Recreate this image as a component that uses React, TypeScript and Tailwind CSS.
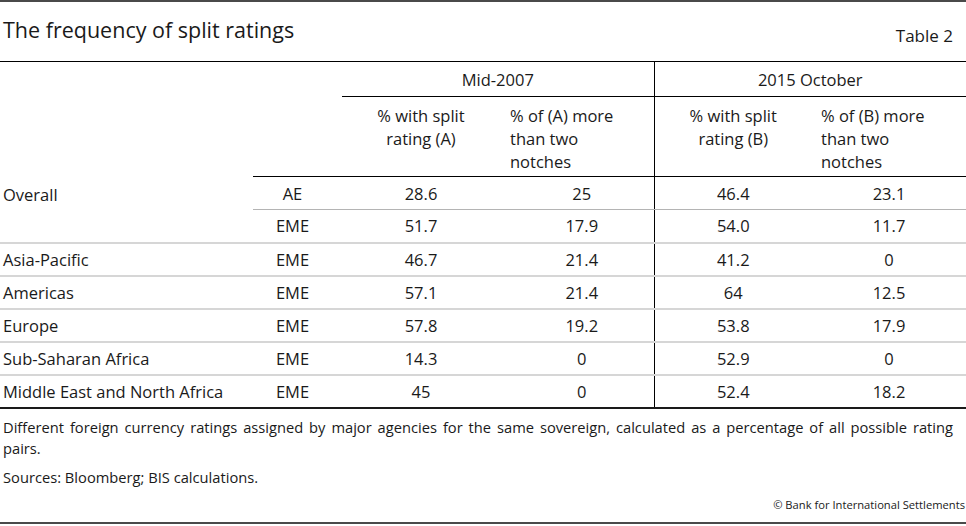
import React from 'react';

const rows = [
  { label: 'Overall', type: 'AE', a: '28.6', a2: '25', b: '46.4', b2: '23.1' },
  { label: '', type: 'EME', a: '51.7', a2: '17.9', b: '54.0', b2: '11.7' },
  { label: 'Asia-Pacific', type: 'EME', a: '46.7', a2: '21.4', b: '41.2', b2: '0' },
  { label: 'Americas', type: 'EME', a: '57.1', a2: '21.4', b: '64', b2: '12.5' },
  { label: 'Europe', type: 'EME', a: '57.8', a2: '19.2', b: '53.8', b2: '17.9' },
  { label: 'Sub-Saharan Africa', type: 'EME', a: '14.3', a2: '0', b: '52.9', b2: '0' },
  { label: 'Middle East and North Africa', type: 'EME', a: '45', a2: '0', b: '52.4', b2: '18.2' },
];

export default function App() {
  return (
    <div className="w-[966px] h-[526px] bg-white text-[#1a1a1a] flex flex-col font-['Open_Sans',sans-serif]">
      <div className="border-t-2 border-[#4a4a4a]" />

      <div className="h-[59px] flex justify-between items-start">
        <h1 className="pt-[14px] pl-[3px] text-[21.5px] leading-[28px] font-normal">The frequency of split ratings</h1>
        <span className="pt-[23px] pr-[13px] text-[17px] leading-[22px]">Table 2</span>
      </div>

      <table className="table-fixed border-collapse w-[966px] text-[16.5px] leading-[23px]">
        <colgroup>
          <col className="w-[253px]" />
          <col className="w-[89px]" />
          <col className="w-[158px]" />
          <col className="w-[154px]" />
          <col className="w-[158px]" />
          <col className="w-[154px]" />
        </colgroup>
        <thead>
          <tr className="h-[35px] border-t border-black">
            <th className="font-normal" />
            <th className="font-normal" />
            <th colSpan={2} className="font-normal text-center border-b border-black">Mid-2007</th>
            <th colSpan={2} className="font-normal text-center border-b border-l border-black">2015 October</th>
          </tr>
          <tr className="h-[80px]">
            <th className="font-normal" />
            <th className="font-normal border-b border-black" />
            <th className="font-normal align-top pt-[7px] text-center border-b border-black">
              % with split<br />rating (A)
            </th>
            <th className="font-normal align-top pt-[7px] pl-[10px] text-left border-b border-black">
              % of (A) more<br />than two<br />notches
            </th>
            <th className="font-normal align-top pt-[7px] text-center border-b border-l border-black">
              % with split<br />rating (B)
            </th>
            <th className="font-normal align-top pt-[7px] pl-[9px] text-left border-b border-black">
              % of (B) more<br />than two<br />notches
            </th>
          </tr>
        </thead>
        <tbody>
          {rows.map((r, i) => {
            const last = i === rows.length - 1;
            const line = i === 0
              ? 'border-b border-[#b4b4b4]'
              : last
                ? 'border-b-2 border-[#1a1a1a]'
                : 'border-b-2 border-[#d6d6d6]';
            return (
              <tr key={i} className="h-[33px]">
                {i === 0 && (
                  <td rowSpan={2} className="align-top pt-[6px] pl-[3px] border-b-2 border-[#d6d6d6]">{r.label}</td>
                )}
                {i > 1 && (
                  <td className={`pl-[3px] whitespace-nowrap ${line}`}>{r.label}</td>
                )}
                <td className={`text-center pr-[10px] ${line}`}>{r.type}</td>
                <td className={`text-center ${line}`}>{r.a}</td>
                <td className={`text-center pl-[10px] ${line}`}>{r.a2}</td>
                <td className={`text-center border-l border-l-black ${line}`}>{r.b}</td>
                <td className={`text-center ${line}`}>{r.b2}</td>
              </tr>
            );
          })}
        </tbody>
      </table>

      <div className="pt-[8px] pl-[3px] pr-[13px] text-[14.7px] leading-[21px]">
        <p className="text-justify">
          Different foreign currency ratings assigned by major agencies for the same sovereign, calculated as a percentage of all possible rating pairs.
        </p>
        <p className="mt-[8px]">Sources: Bloomberg; BIS calculations.</p>
      </div>

      <div className="flex-1" />
      <div className="text-right text-[11.2px] leading-[16px] pr-[1px] mb-[9px]">© Bank for International Settlements</div>
      <div className="border-t-2 border-[#4a4a4a] mb-[2px]" />
    </div>
  );
}
